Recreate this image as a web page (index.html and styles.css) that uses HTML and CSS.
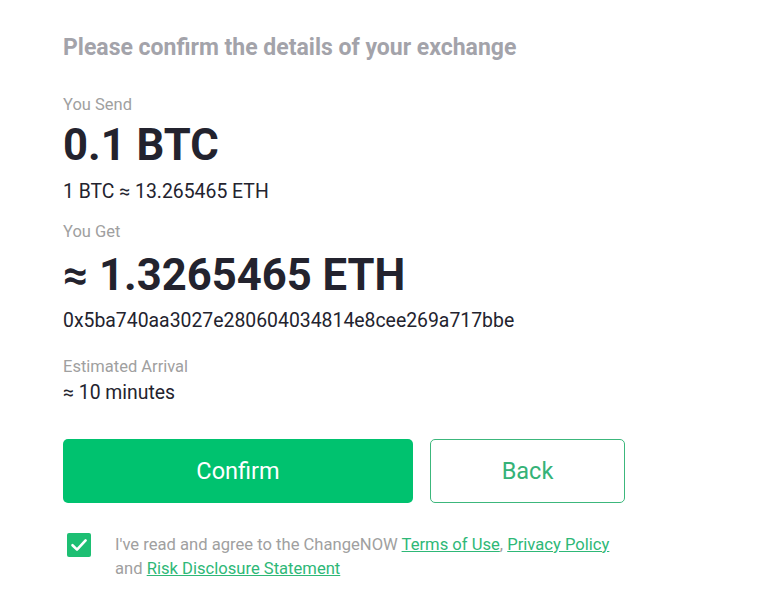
FILE: index.html
```html
<!DOCTYPE html>
<html>
<head>
<meta charset="utf-8">
<link rel="stylesheet" href="styles.css">
</head>
<body>
<div class="confirm">
  <h1 class="title">Please confirm the details of your exchange</h1>
  <div class="label label-send">You Send</div>
  <div class="amount amount-send">0.1 BTC</div>
  <div class="sub sub-rate">1 BTC ≈ 13.265465 ETH</div>
  <div class="label label-get">You Get</div>
  <div class="amount amount-get">≈ 1.3265465 ETH</div>
  <div class="sub sub-address">0x5ba740aa3027e280604034814e8cee269a717bbe</div>
  <div class="label label-arrival">Estimated Arrival</div>
  <div class="sub sub-time">≈ 10 minutes</div>
  <div class="actions">
    <button class="btn btn-confirm">Confirm</button>
    <button class="btn btn-back">Back</button>
  </div>
  <div class="agree">
    <span class="check">
      <svg width="24" height="24" viewBox="0 0 24 24"><path d="M5.5 12.2 L10 16.6 L18.6 7.4" fill="none" stroke="#fff" stroke-width="2.6" stroke-linecap="round" stroke-linejoin="round"/></svg>
    </span>
    <p class="agree-text">I've read and agree to the ChangeNOW <a href="#">Terms of Use</a>, <a href="#">Privacy Policy</a> and <a href="#">Risk Disclosure Statement</a></p>
  </div>
</div>
</body>
</html>
```
FILE: styles.css
```css
* { box-sizing: border-box; }
html, body { margin: 0; padding: 0; background: #ffffff; }
body { font-family: Roboto, "Liberation Sans", sans-serif; color: #23232e; }
.confirm { padding: 34px 0 0 63px; width: 640px; }
.title { margin: 0; font-size: 23px; line-height: 28px; font-weight: 700; color: #a3a3aa; }
.label { font-size: 16.5px; line-height: 20px; color: #a0a0a0; }
.label-send { margin-top: 33px; }
.label-get { margin-top: 18px; }
.label-arrival { margin-top: 24px; }
.amount { font-size: 43.6px; line-height: 52px; font-weight: 700; color: #23232e; }
.amount-send { margin-top: 5px; }
.amount-get { margin-top: 8px; }
.sub { font-size: 19.4px; line-height: 24px; color: #23232e; }
.sub-rate { margin-top: 8px; }
.sub-address { margin-top: 7px; }
.sub-time { margin-top: 4px; }
.actions { display: flex; gap: 17px; margin-top: 34px; }
.btn { height: 64px; border-radius: 5px; font-family: inherit; font-size: 23.5px; cursor: pointer; }
.btn-confirm { width: 350px; background: #00c26f; border: none; color: #ffffff; }
.btn-back { width: 195px; background: #ffffff; border: 1px solid #3cb77c; color: #35b277; }
.agree { display: flex; align-items: flex-start; gap: 24px; margin-top: 30px; padding-left: 4px; }
.check { flex: none; width: 24px; height: 24px; border-radius: 2px; background: #1dbf73; display: flex; align-items: center; justify-content: center; }
.agree-text { margin: 0; font-size: 16.6px; line-height: 24px; color: #a0a0a0; width: 505px; }
.agree-text a { color: #2eb877; text-decoration: underline; }
```
